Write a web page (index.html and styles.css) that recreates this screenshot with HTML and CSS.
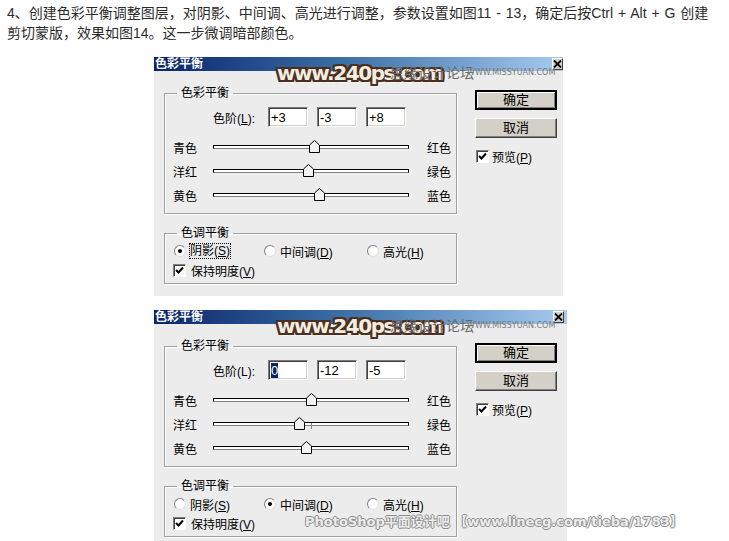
FILE: index.html
```html
<!DOCTYPE html>
<html lang="zh-CN">
<head>
    <meta charset="UTF-8">
    <title>色彩平衡</title>
    <link rel="stylesheet" href="styles.css">
</head>
<body>
    <p class="intro">4、创建色彩平衡调整图层，对阴影、中间调、高光进行调整，参数设置如图11 - 13，确定后按Ctrl + Alt + G 创建<br>剪切蒙版，效果如图14。这一步微调暗部颜色。</p>

    <!-- 图11：阴影 -->
    <div class="dialog">
        <div class="titlebar">
            <span class="title">色彩平衡</span>
            <span class="close"><svg width="9" height="8" viewBox="0 0 9 8"><path d="M1 0.5 L8 7.5 M8 0.5 L1 7.5" stroke="#000" stroke-width="1.8"/></svg></span>
        </div>
        <div class="wm-240">www.240ps.com</div>
        <div class="wm-cn">思缘设计论坛</div>
        <div class="wm-missyuan">WWW.MISSYUAN.COM</div>

        <div class="dialog-body">
            <div class="left-col">
                <fieldset class="group group-color">
                    <legend>色彩平衡</legend>
                    <div class="level-row">
                        <span class="level-label">色阶(<u>L</u>):</span>
                        <span class="field">+3</span>
                        <span class="field">-3</span>
                        <span class="field">+8</span>
                    </div>
                    <div class="slider-row">
                        <span class="side">青色</span>
                        <span class="track"><svg class="thumb" style="left: calc(50% + 3px - 5.5px)" width="11" height="13" viewBox="0 0 11 13"><path d="M0.5 12.5 V5 L5.5 0.5 L10.5 5 V12.5 Z" fill="#f2f2f2" stroke="#000"/></svg></span>
                        <span class="side side-right">红色</span>
                    </div>
                    <div class="slider-row">
                        <span class="side">洋红</span>
                        <span class="track"><svg class="thumb" style="left: calc(50% - 3px - 5.5px)" width="11" height="13" viewBox="0 0 11 13"><path d="M0.5 12.5 V5 L5.5 0.5 L10.5 5 V12.5 Z" fill="#f2f2f2" stroke="#000"/></svg></span>
                        <span class="side side-right">绿色</span>
                    </div>
                    <div class="slider-row">
                        <span class="side">黄色</span>
                        <span class="track"><svg class="thumb" style="left: calc(50% + 8px - 5.5px)" width="11" height="13" viewBox="0 0 11 13"><path d="M0.5 12.5 V5 L5.5 0.5 L10.5 5 V12.5 Z" fill="#f2f2f2" stroke="#000"/></svg></span>
                        <span class="side side-right">蓝色</span>
                    </div>
                </fieldset>

                <fieldset class="group group-tone">
                    <legend>色调平衡</legend>
                    <div class="radio-row">
                        <span class="option opt-1"><span class="radio checked"></span><span class="focus">阴影(<u>S</u>)</span></span>
                        <span class="option opt-2"><span class="radio"></span><span>中间调(<u>D</u>)</span></span>
                        <span class="option"><span class="radio"></span><span>高光(<u>H</u>)</span></span>
                    </div>
                    <div class="check-row">
                        <span class="checkbox"><svg width="9" height="9" viewBox="0 0 9 9"><path d="M1 4 L3.5 6.5 L8 1.5" fill="none" stroke="#000" stroke-width="2"/></svg></span><span>保持明度(<u>V</u>)</span>
                    </div>
                </fieldset>
            </div>

            <div class="right-col">
                <div class="button default">确定</div>
                <div class="button">取消</div>
                <div class="check-row preview">
                    <span class="checkbox"><svg width="9" height="9" viewBox="0 0 9 9"><path d="M1 4 L3.5 6.5 L8 1.5" fill="none" stroke="#000" stroke-width="2"/></svg></span><span>预览(<u>P</u>)</span>
                </div>
            </div>
        </div>
    </div>

    <!-- 图12：中间调 -->
    <div class="dialog dialog-second">
        <div class="titlebar">
            <span class="title">色彩平衡</span>
            <span class="close"><svg width="9" height="8" viewBox="0 0 9 8"><path d="M1 0.5 L8 7.5 M8 0.5 L1 7.5" stroke="#000" stroke-width="1.8"/></svg></span>
        </div>
        <div class="wm-240">www.240ps.com</div>
        <div class="wm-cn">思缘设计论坛</div>
        <div class="wm-missyuan">WWW.MISSYUAN.COM</div>

        <div class="dialog-body">
            <div class="left-col">
                <fieldset class="group group-color">
                    <legend>色彩平衡</legend>
                    <div class="level-row">
                        <span class="level-label">色阶(L):</span>
                        <span class="field"><span class="selected">0</span></span>
                        <span class="field">-12</span>
                        <span class="field">-5</span>
                    </div>
                    <div class="slider-row">
                        <span class="side">青色</span>
                        <span class="track"><svg class="thumb" style="left: calc(50% + 0px - 5.5px)" width="11" height="13" viewBox="0 0 11 13"><path d="M0.5 12.5 V5 L5.5 0.5 L10.5 5 V12.5 Z" fill="#f2f2f2" stroke="#000"/></svg></span>
                        <span class="side side-right">红色</span>
                    </div>
                    <div class="slider-row">
                        <span class="side">洋红</span>
                        <span class="track"><span class="tick"></span><svg class="thumb" style="left: calc(50% - 12px - 5.5px)" width="11" height="13" viewBox="0 0 11 13"><path d="M0.5 12.5 V5 L5.5 0.5 L10.5 5 V12.5 Z" fill="#f2f2f2" stroke="#000"/></svg></span>
                        <span class="side side-right">绿色</span>
                    </div>
                    <div class="slider-row">
                        <span class="side">黄色</span>
                        <span class="track"><svg class="thumb" style="left: calc(50% - 5px - 5.5px)" width="11" height="13" viewBox="0 0 11 13"><path d="M0.5 12.5 V5 L5.5 0.5 L10.5 5 V12.5 Z" fill="#f2f2f2" stroke="#000"/></svg></span>
                        <span class="side side-right">蓝色</span>
                    </div>
                </fieldset>

                <fieldset class="group group-tone">
                    <legend>色调平衡</legend>
                    <div class="radio-row">
                        <span class="option opt-1"><span class="radio"></span><span>阴影(<u>S</u>)</span></span>
                        <span class="option opt-2"><span class="radio checked"></span><span>中间调(<u>D</u>)</span></span>
                        <span class="option"><span class="radio"></span><span>高光(<u>H</u>)</span></span>
                    </div>
                    <div class="check-row">
                        <span class="checkbox"><svg width="9" height="9" viewBox="0 0 9 9"><path d="M1 4 L3.5 6.5 L8 1.5" fill="none" stroke="#000" stroke-width="2"/></svg></span><span>保持明度(<u>V</u>)</span>
                    </div>
                </fieldset>
            </div>

            <div class="right-col">
                <div class="button default">确定</div>
                <div class="button">取消</div>
                <div class="check-row preview">
                    <span class="checkbox"><svg width="9" height="9" viewBox="0 0 9 9"><path d="M1 4 L3.5 6.5 L8 1.5" fill="none" stroke="#000" stroke-width="2"/></svg></span><span>预览(<u>P</u>)</span>
                </div>
            </div>
        </div>
        <div class="wm-tieba">PhotoShop平面设计吧 【www.linecg.com/tieba/1783】</div>
    </div>
</body>
</html>
```

FILE: styles.css
```css
body {
    margin: 0;
    background: #fff;
    font-family: "Liberation Sans", "Noto Sans CJK SC", sans-serif;
}
.intro {
    margin: 0;
    padding: 3px 0 0 7px;
    font-size: 14px;
    line-height: 20px;
    word-spacing: 1px;
    color: #2b2b2b;
    white-space: nowrap;
}

/* 对话框 */
.dialog {
    position: relative;
    margin: 14px 0 0 154px;
    width: 409px;
    height: 239px;
    background: #ececec;
    font-family: "Liberation Sans", "Noto Sans CJK SC", sans-serif;
    font-size: 12px;
    color: #000;
}
.dialog-second {
    width: 413px;
    height: 231px;
}
.titlebar {
    display: flex;
    justify-content: space-between;
    align-items: flex-start;
    height: 14px;
    background: linear-gradient(to right, #0a246a, #3a6ea5 45%, #a6caf0);
}
.title {
    color: #fff;
    font-weight: bold;
    line-height: 14px;
    padding-left: 1px;
}
.close {
    display: flex;
    align-items: center;
    justify-content: center;
    width: 11px;
    height: 12px;
    margin-top: 1px;
    box-sizing: border-box;
    background: #d4d0c8;
    border: 1px solid;
    border-color: #fff #404040 #404040 #fff;
}
.dialog-second .close {
    margin-right: 3px;
}
.dialog-body {
    display: flex;
    gap: 18px;
    padding: 15px 0 0 10px;
}
.left-col {
    display: flex;
    flex-direction: column;
    gap: 12px;
    width: 293px;
    flex-shrink: 0;
}

/* 分组框 */
.group {
    margin: 0;
    padding: 0 0 0 8px;
    min-width: 0;
    border: 1px solid #a0a0a0;
    box-shadow: 1px 1px 0 #fff, inset 1px 1px 0 #fff;
}
.group legend {
    margin-left: 4px;
    padding: 0 4px;
    line-height: 14px;
}
.group-color {
    padding-bottom: 6px;
}
.group-tone {
    padding-bottom: 4px;
}
.level-row {
    display: flex;
    align-items: center;
    gap: 9px;
    height: 20px;
    margin-top: 7px;
    padding-left: 40px;
}
.level-label {
    width: 46px;
}
.field {
    box-sizing: border-box;
    width: 40px;
    height: 20px;
    padding: 2px 0 0 2px;
    background: #fff;
    border: 1px solid;
    border-color: #7a7a7a #fff #fff #7a7a7a;
    box-shadow: inset 1px 1px 0 #404040, inset -1px -1px 0 #d4d0c8;
    font-size: 13px;
    line-height: 15px;
}
.selected {
    background: #0a246a;
    color: #fff;
}
.slider-row {
    display: flex;
    align-items: center;
    height: 24px;
}
.level-row + .slider-row {
    margin-top: 8px;
}
.side {
    width: 40px;
    flex-shrink: 0;
}
.side-right {
    width: auto;
    margin-left: 18px;
}
.track {
    position: relative;
    flex-shrink: 0;
    box-sizing: border-box;
    width: 196px;
    height: 4px;
    background: #fff;
    border: 1px solid #000;
    border-bottom-color: #808080;
}
.thumb {
    position: absolute;
    top: -6px;
}
.tick {
    position: absolute;
    left: 97px;
    top: 0;
    width: 1px;
    height: 6px;
    background: #808080;
}

/* 单选与复选 */
.radio-row {
    display: flex;
    align-items: center;
    height: 18px;
    margin-top: 2px;
}
.option {
    display: inline-flex;
    align-items: center;
    gap: 4px;
}
.opt-1 {
    width: 90px;
}
.opt-2 {
    width: 103px;
}
.radio {
    box-sizing: border-box;
    width: 12px;
    height: 12px;
    margin-left: 1px;
    border-radius: 50%;
    background: #fff;
    border: 1px solid;
    border-color: #808080 #e0e0e0 #e0e0e0 #808080;
    display: flex;
    align-items: center;
    justify-content: center;
}
.radio.checked::after {
    content: "";
    width: 4px;
    height: 4px;
    border-radius: 50%;
    background: #000;
}
.focus {
    outline: 1px dotted #000;
    outline-offset: 0;
    line-height: 14px;
}
.check-row {
    display: flex;
    align-items: center;
    gap: 5px;
    height: 18px;
    margin-top: 1px;
}
.checkbox {
    box-sizing: border-box;
    width: 13px;
    height: 13px;
    background: #fff;
    border: 1px solid;
    border-color: #808080 #fff #fff #808080;
    box-shadow: inset 1px 1px 0 #404040;
    display: flex;
    align-items: center;
    justify-content: center;
}

/* 右侧按钮 */
.right-col {
    padding-top: 4px;
}
.button {
    box-sizing: border-box;
    width: 82px;
    height: 20px;
    margin-bottom: 8px;
    background: #d4d0c8;
    border: 1px solid;
    border-color: #fff #404040 #404040 #fff;
    box-shadow: inset -1px -1px 0 #808080;
    text-align: center;
    line-height: 18px;
    font-size: 13px;
}
.button.default {
    border: 2px solid #000;
    box-shadow: inset 1px 1px 0 #fff, inset -1px -1px 0 #808080;
    line-height: 16px;
}
.preview {
    margin-top: 9px;
    padding-left: 1px;
    gap: 3px;
}

/* 水印 */
.wm-240 {
    position: absolute;
    left: 123px;
    top: 4px;
    font-family: "DejaVu Sans", sans-serif;
    font-weight: bold;
    font-size: 20px;
    letter-spacing: -1.4px;
    color: #f4eee0;
    text-shadow: 2px 0 0 #4b3022, -2px 0 0 #4b3022, 0 2px 0 #4b3022, 0 -2px 0 #4b3022,
        2px 2px 0 #4b3022, -2px -2px 0 #4b3022, 2px -2px 0 #4b3022, -2px 2px 0 #4b3022,
        3px 3px 2px rgba(255, 255, 255, 0.7);
}
.wm-cn {
    position: absolute;
    left: 236px;
    top: 6px;
    font-family: "Noto Sans CJK SC", sans-serif;
    font-size: 14px;
    line-height: 18px;
    color: #6a6a6a;
}
.wm-missyuan {
    position: absolute;
    left: 313px;
    top: 11px;
    font-family: "DejaVu Sans", sans-serif;
    font-size: 8px;
    line-height: 10px;
    color: #7a7a7a;
}
.wm-tieba {
    position: absolute;
    left: 151px;
    top: 203px;
    white-space: nowrap;
    font-family: "DejaVu Sans", "Noto Sans CJK SC", sans-serif;
    font-weight: bold;
    font-size: 13px;
    line-height: 18px;
    color: #ececec;
    text-shadow: 1px 0 0 #8c8c8c, -1px 0 0 #8c8c8c, 0 1px 0 #8c8c8c, 0 -1px 0 #8c8c8c;
}
```
